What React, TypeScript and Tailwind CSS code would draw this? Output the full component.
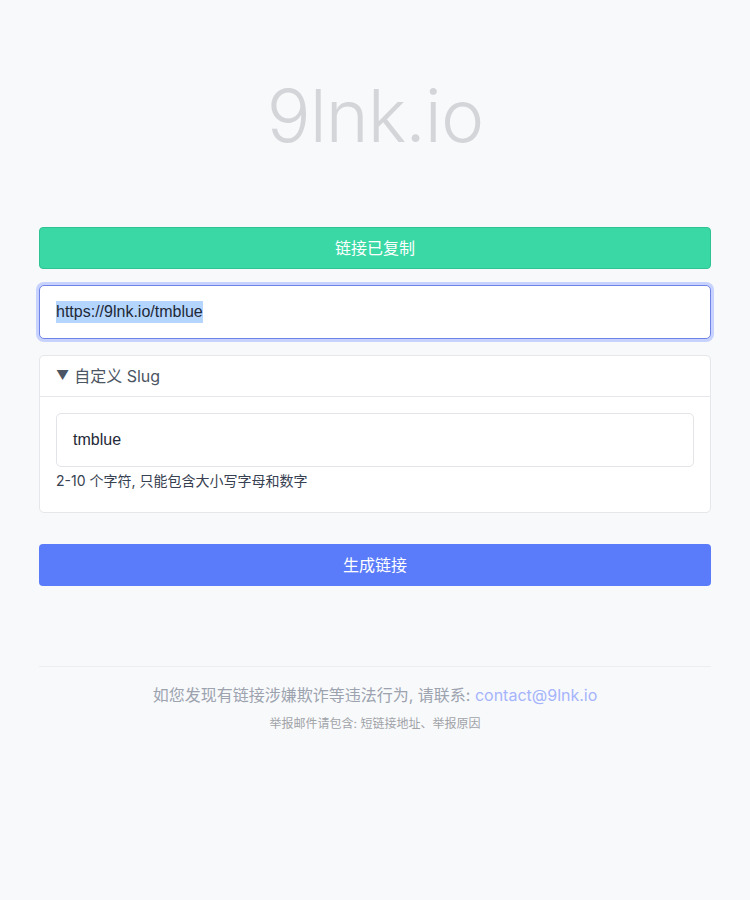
import React from "react";

export default function App() {
  return (
    <div className="min-h-[900px] bg-[#f8f9fb]" style={{ fontFamily: "Inter, 'Noto Sans CJK SC', sans-serif" }}>
      <div className="mx-auto w-[672px] pt-[64px]">
        <h1 className="text-center text-[73px] font-light leading-[104px] tracking-[-1px] text-[#d4d5d8]">9lnk.io</h1>
        <div className="mt-[59px] flex flex-col">
          <button className="h-[42px] w-full rounded-[4px] border border-[#2fc393] bg-[#3ad8a5] text-[16px] text-white">链接已复制</button>
          <div className="mt-[16px] flex h-[54px] w-full items-center rounded-[5px] border border-[#6f84e6] bg-white px-[16px] shadow-[0_0_0_3px_#c7d2fe]">
            <span className="bg-[#b4d5fe] text-[16px] leading-[22px] text-[#1f2937] font-['Liberation_Sans',sans-serif]">https://9lnk.io/tmblue</span>
          </div>
          <div className="mt-[16px] rounded-[5px] border border-[#e5e7eb] bg-white">
            <div className="flex h-[41px] items-center gap-[5px] border-b border-[#e5e7eb] px-[16px] text-[16px] text-[#4b5563]">
              <span className="text-[13px] text-[#4b5563]">▼</span>
              <span>自定义 Slug</span>
            </div>
            <div className="px-[16px] pt-[16px] pb-[21px]">
              <div className="flex h-[54px] items-center rounded-[5px] border border-[#e2e4e8] px-[16px] text-[16px] text-[#1f2937] font-['Liberation_Sans',sans-serif]">tmblue</div>
              <p className="mt-[4px] text-[14px] leading-[20px] text-[#374151]">2-10 个字符, 只能包含大小写字母和数字</p>
            </div>
          </div>
          <button className="mt-[31px] h-[42px] w-full rounded-[4px] bg-[#5b7cfa] text-[16px] text-white">生成链接</button>
        </div>
        <div className="mt-[80px] border-t border-[#eceef1] pt-[16px] text-center">
          <p className="text-[16px] leading-[24px] text-[#9ca3af]">
            如您发现有链接涉嫌欺诈等违法行为, 请联系: <span className="text-[#a5b4fc]">contact@9lnk.io</span>
          </p>
          <p className="mt-[9px] text-[12px] leading-[16px] text-[#a0a3a8]">举报邮件请包含: 短链接地址、举报原因</p>
        </div>
      </div>
    </div>
  );
}
